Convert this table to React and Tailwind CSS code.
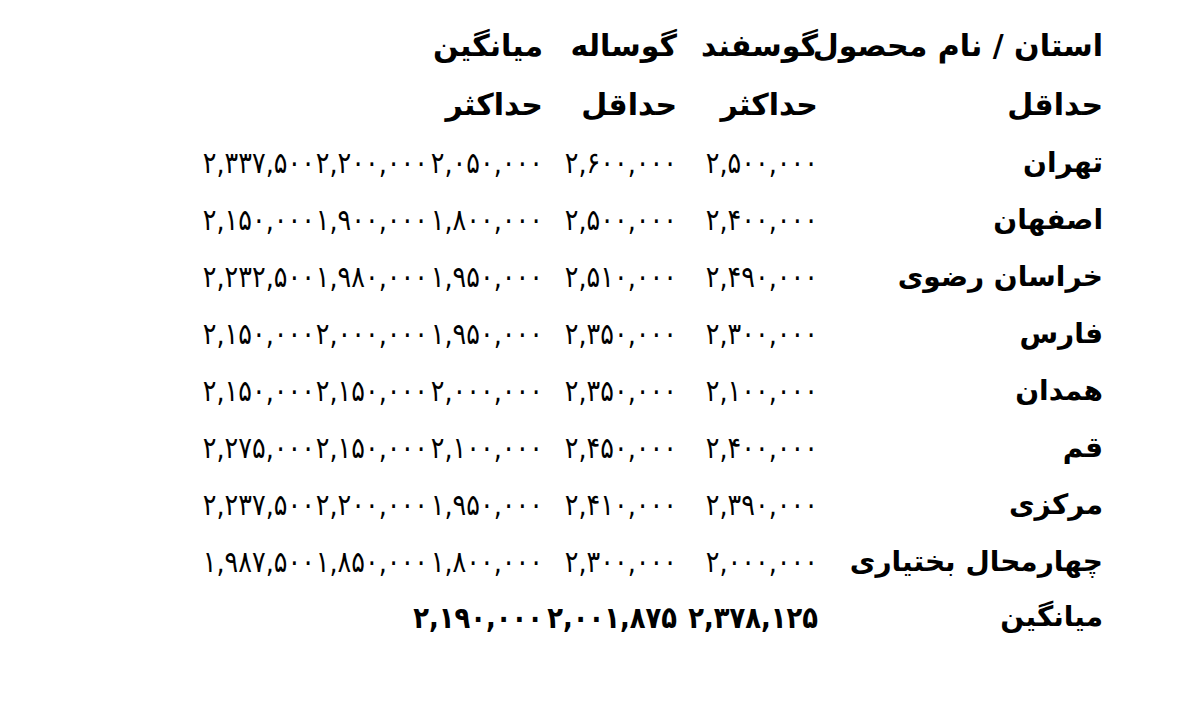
const header = [
  ["استان / نام محصول", "گوسفند", "گوساله", "میانگین", "", ""],
  ["حداقل", "حداکثر", "حداقل", "حداکثر", "", ""],
]

const rows = [
  ["تهران", "۲,۵۰۰,۰۰۰", "۲,۶۰۰,۰۰۰", "۲,۰۵۰,۰۰۰", "۲,۲۰۰,۰۰۰", "۲,۳۳۷,۵۰۰"],
  ["اصفهان", "۲,۴۰۰,۰۰۰", "۲,۵۰۰,۰۰۰", "۱,۸۰۰,۰۰۰", "۱,۹۰۰,۰۰۰", "۲,۱۵۰,۰۰۰"],
  ["خراسان رضوی", "۲,۴۹۰,۰۰۰", "۲,۵۱۰,۰۰۰", "۱,۹۵۰,۰۰۰", "۱,۹۸۰,۰۰۰", "۲,۲۳۲,۵۰۰"],
  ["فارس", "۲,۳۰۰,۰۰۰", "۲,۳۵۰,۰۰۰", "۱,۹۵۰,۰۰۰", "۲,۰۰۰,۰۰۰", "۲,۱۵۰,۰۰۰"],
  ["همدان", "۲,۱۰۰,۰۰۰", "۲,۳۵۰,۰۰۰", "۲,۰۰۰,۰۰۰", "۲,۱۵۰,۰۰۰", "۲,۱۵۰,۰۰۰"],
  ["قم", "۲,۴۰۰,۰۰۰", "۲,۴۵۰,۰۰۰", "۲,۱۰۰,۰۰۰", "۲,۱۵۰,۰۰۰", "۲,۲۷۵,۰۰۰"],
  ["مرکزی", "۲,۳۹۰,۰۰۰", "۲,۴۱۰,۰۰۰", "۱,۹۵۰,۰۰۰", "۲,۲۰۰,۰۰۰", "۲,۲۳۷,۵۰۰"],
  ["چهارمحال بختیاری", "۲,۰۰۰,۰۰۰", "۲,۳۰۰,۰۰۰", "۱,۸۰۰,۰۰۰", "۱,۸۵۰,۰۰۰", "۱,۹۸۷,۵۰۰"],
]

const avg = ["میانگین", "۲,۳۷۸,۱۲۵", "۲,۰۰۱,۸۷۵", "۲,۱۹۰,۰۰۰", "", ""]

function Row({ cells, head, bold, h = "h-[57px]" }) {
  return (
    <>
      {cells.map((c, i) => (
        <div
          key={i}
          className={`${h} flex items-center justify-start whitespace-nowrap ${
            head ? "text-[30px] font-bold" : i === 0 ? "text-[28px] font-semibold" : "text-[30px]"
          }`}
        >
          {i === 0 || head ? (
            c
          ) : bold ? (
            <span className="inline-block origin-right scale-x-[0.86] font-bold">{c}</span>
          ) : (
            <span className="inline-block origin-right scale-x-[0.85] font-normal">{c}</span>
          )}
        </div>
      ))}
    </>
  )
}

export default function App() {
  return (
    <div className="w-[1200px] h-[712px] bg-white text-black overflow-hidden font-['DejaVu_Sans',sans-serif]">
      <div
        dir="rtl"
        className="grid grid-cols-[285px_141px_134px_115px_113px_150px] pt-[16px] pr-[97px]"
      >
        {header.map((r, i) => (
          <Row key={"h" + i} cells={r} head h="h-[59px]" />
        ))}
        {rows.map((r, i) => (
          <Row key={i} cells={r} />
        ))}
        <Row cells={avg} bold h="h-[54px]" />
      </div>
    </div>
  )
}
